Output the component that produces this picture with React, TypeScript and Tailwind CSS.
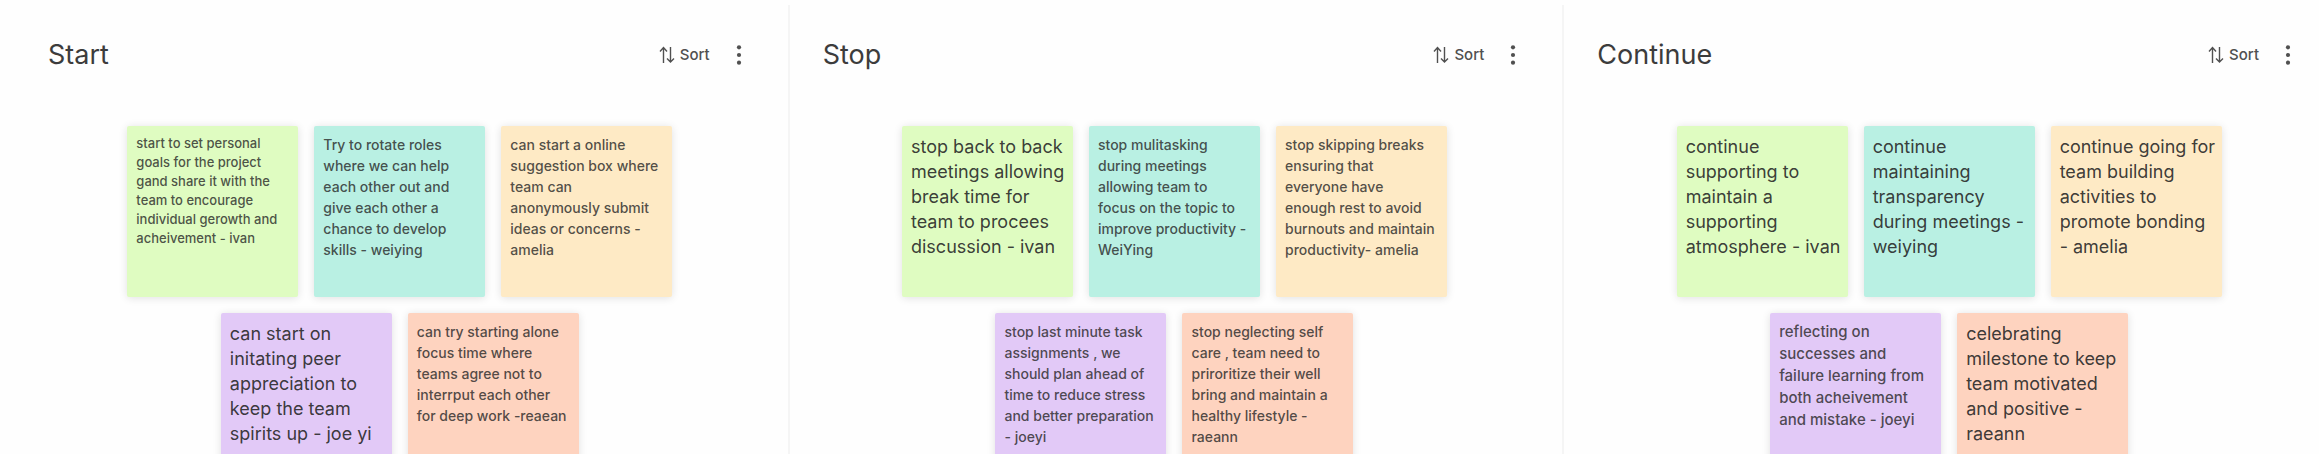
import React from "react";

type Size = "xs" | "sm" | "md" | "lg";
type Note = { size: Size; lines: string[] };
type ColumnData = { title: string; notes: Note[] };

const columns: ColumnData[] = [
  {
    title: "Start",
    notes: [
      { size: "xs", lines: ["start to set personal", "goals for the project", "gand share it with the", "team to encourage", "individual gerowth and", "acheivement - ivan"] },
      { size: "sm", lines: ["Try to rotate roles", "where we can help", "each other out and", "give each other a", "chance to develop", "skills - weiying"] },
      { size: "sm", lines: ["can start a online", "suggestion box where", "team can", "anonymously submit", "ideas or concerns -", "amelia"] },
      { size: "lg", lines: ["can start on", "initating peer", "appreciation to", "keep the team", "spirits up - joe yi"] },
      { size: "sm", lines: ["can try starting alone", "focus time where", "teams agree not to", "interrput each other", "for deep work -reaean"] },
    ],
  },
  {
    title: "Stop",
    notes: [
      { size: "lg", lines: ["stop back to back", "meetings allowing", "break time for", "team to procees", "discussion - ivan"] },
      { size: "sm", lines: ["stop mulitasking", "during meetings", "allowing team to", "focus on the topic to", "improve productivity -", "WeiYing"] },
      { size: "sm", lines: ["stop skipping breaks", "ensuring that", "everyone have", "enough rest to avoid", "burnouts and maintain", "productivity- amelia"] },
      { size: "sm", lines: ["stop last minute task", "assignments , we", "should plan ahead of", "time to reduce stress", "and better preparation", "- joeyi"] },
      { size: "sm", lines: ["stop neglecting self", "care , team need to", "priroritize their well", "bring and maintain a", "healthy lifestyle -", "raeann"] },
    ],
  },
  {
    title: "Continue",
    notes: [
      { size: "lg", lines: ["continue", "supporting to", "maintain a", "supporting", "atmosphere - ivan"] },
      { size: "lg", lines: ["continue", "maintaining", "transparency", "during meetings -", "weiying"] },
      { size: "lg", lines: ["continue going for", "team building", "activities to", "promote bonding", "- amelia"] },
      { size: "md", lines: ["reflecting on", "successes and", "failure learning from", "both acheivement", "and mistake - joeyi"] },
      { size: "lg", lines: ["celebrating", "milestone to keep", "team motivated", "and positive -", "raeann"] },
    ],
  },
];

const noteColors = ["bg-[#dffcc1]", "bg-[#b9f0e3]", "bg-[#feeac5]", "bg-[#e2c9f7]", "bg-[#fed3bf]"];

const textSizes: Record<Size, string> = {
  xs: "text-[13px] leading-[19px] font-medium text-[#262626]/80",
  sm: "text-[14px] leading-[21px] font-medium text-[#262626]/80",
  md: "text-[15px] leading-[22px] font-medium text-[#262626]/80",
  lg: "text-[18px] leading-[25px] text-[#262626]/90",
};

function SortIcon() {
  return (
    <svg width="16" height="18" viewBox="0 0 16 18" fill="none" stroke="currentColor" strokeWidth="1.4" aria-hidden="true">
      <path d="M4.500 17V2M1 5.500 4.500 1.500 8 5.500M11.500 1v15M8 12.500l3.500 3.500 3.500-3.500" />
    </svg>
  );
}

function DotsIcon() {
  return (
    <svg width="6" height="20" viewBox="0 0 6 20" fill="currentColor" aria-hidden="true">
      <circle cx="3" cy="2.300" r="2.100" />
      <circle cx="3" cy="10" r="2.100" />
      <circle cx="3" cy="17.700" r="2.100" />
    </svg>
  );
}

function StickyNote({ note, color }: { note: Note; color: string }) {
  return (
    <li className={`h-[171px] w-[171px] shrink-0 rounded-xs px-[9px] pt-2 shadow-[0_1px_8px_rgba(0,0,0,0.12)] ${color}`}>
      <p className={`whitespace-pre ${textSizes[note.size]}`}>{note.lines.join("\n")}</p>
    </li>
  );
}

function Column({ column }: { column: ColumnData }) {
  return (
    <section className="border-r-2 border-[#f5f5f5]">
      <header className="flex h-[100px] items-center justify-between pr-[46px] pl-[33px]">
        <h2 className="text-[27px] leading-8 text-[#3c3c3c]">{column.title}</h2>
        <div className="flex items-center gap-[26px] text-[#505050]">
          <button type="button" className="flex items-center gap-[5px] text-[15px] leading-5 font-medium">
            <SortIcon />
            Sort
          </button>
          <button type="button" aria-label={`${column.title} options`}>
            <DotsIcon />
          </button>
        </div>
      </header>
      <ul className="flex flex-wrap justify-center gap-4 pt-[21px] pr-[102px] pl-[99px]">
        {column.notes.map((note, i) => (
          <StickyNote key={i} note={note} color={noteColors[i]} />
        ))}
      </ul>
    </section>
  );
}

export default function App() {
  return (
    <main className="h-screen overflow-hidden bg-[#fefefe] font-['Inter','Liberation_Sans',sans-serif]">
      <div className="-mr-5 grid grid-cols-3 pt-[5px] pl-[15px]">
        {columns.map((column) => (
          <Column key={column.title} column={column} />
        ))}
      </div>
    </main>
  );
}
